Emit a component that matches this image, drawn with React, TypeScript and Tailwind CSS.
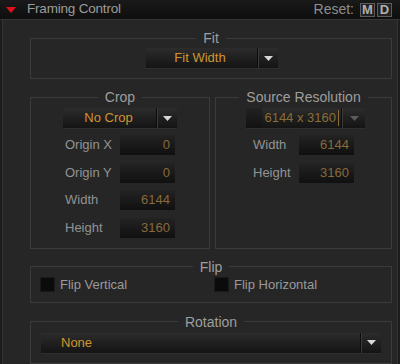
import React from "react";

const font = { fontFamily: '"Liberation Sans", Arial, sans-serif' };

function Arrow({ dim = false }: { dim?: boolean }) {
  return (
    <svg width="9" height="5" viewBox="0 0 9 5">
      <polygon points="0,0 9,0 4.5,5" fill={dim ? "#5a5a5a" : "#d8d8d8"} />
    </svg>
  );
}

function Dropdown({
  text,
  w,
  arrowW,
  align = "center",
  dim = false,
}: {
  text: string;
  w: string;
  arrowW: string;
  align?: "center" | "left" | "right";
  dim?: boolean;
}) {
  return (
    <div className={`flex h-[20px] ${w} bg-gradient-to-b from-[#2c2c2c] to-[#141414] shadow-[0_1px_0_#2e2e2e]`}>
      {dim && <div className="w-[16px] bg-gradient-to-b from-[#222222] to-[#121212]" />}
      <div
        className={`flex flex-1 items-center text-[13px] ${
          align === "center" ? "justify-center pr-[2px]" : align === "left" ? "justify-start pl-[20px]" : "justify-end pr-[2px]"
        } ${dim ? "text-[#8c6c36]" : "text-[#cf962e]"}`}
      >
        {text}
        {dim && <span className="ml-[2px] h-[16px] w-px bg-[#8c6c36]" />}
      </div>
      <div className="w-px bg-[#0c0c0c]" />
      <div className="w-px bg-[#3a3a3a]" />
      <div className={`flex ${arrowW} items-center justify-center`}>
        <Arrow dim={dim} />
      </div>
    </div>
  );
}

function Field({ label, value, labelW }: { label: string; value: string; labelW: string }) {
  return (
    <div className="flex h-[20px] items-center">
      <div className={`${labelW} text-[13px] text-[#939393]`}>{label}</div>
      <div className="flex h-[20px] w-[55px] items-center justify-end bg-gradient-to-b from-[#232323] to-[#101010] pr-[5px] text-[13px] text-[#88693a]">
        {value}
      </div>
    </div>
  );
}

function Group({ title, className = "", children }: { title: string; className?: string; children: React.ReactNode }) {
  return (
    <fieldset className={`border border-[#3b3b3b] ${className}`}>
      <legend className="mx-auto px-[7px] text-[14px] leading-[14px] text-[#9e9e9e]">{title}</legend>
      {children}
    </fieldset>
  );
}

export default function App() {
  return (
    <div className="h-[364px] w-[400px] overflow-hidden bg-[#1c1c1c]" style={font}>
      <div className="flex h-[20px] items-center border-b border-[#363636] bg-gradient-to-b from-[#1a1a1a] to-[#0e0e0e] pl-[6px] pr-[8px]">
        <svg width="10" height="6" viewBox="0 0 10 6" className="mt-[1px]">
          <polygon points="0,0 10,0 5,6" fill="#e3101b" />
        </svg>
        <span className="ml-[11px] text-[13.5px] tracking-[-0.2px] text-[#9c9c9c]">Framing Control</span>
        <div className="ml-auto flex items-center">
          <span className="mr-[6px] text-[14px] text-[#8e8e8e]">Reset:</span>
          <div className="flex h-[14px] w-[15px] items-center justify-center border border-[#5c5c5c] bg-[#232323] text-[13px] font-bold text-[#b0b0b0]">
            M
          </div>
          <div className="ml-[2px] flex h-[14px] w-[15px] items-center justify-center border border-[#5c5c5c] bg-[#232323] text-[13px] font-bold text-[#b0b0b0]">
            D
          </div>
        </div>
      </div>
      <div className="ml-[2px] mr-[2px] h-[344px] border-l border-r border-[#333333] bg-[#262626] pl-[27px] pr-[5px] pt-[11px]">
        <Group title="Fit" className="pb-[10px] pt-[3px]">
          <div className="flex justify-center pl-[1px]">
            <Dropdown text="Fit Width" w="w-[132px]" arrowW="w-[19px]" />
          </div>
        </Group>
        <div className="mt-[11px] flex gap-[5px]">
          <Group title="Crop" className="w-[180px] pb-[10px] pt-[4px]">
            <div className="flex flex-col items-center">
              <Dropdown text="No Crop" w="w-[114px]" arrowW="w-[19px]" />
              <div className="mt-[7px] flex flex-col gap-[7.6px]">
                <Field label="Origin X" value="0" labelW="w-[55px]" />
                <Field label="Origin Y" value="0" labelW="w-[55px]" />
                <Field label="Width" value="6144" labelW="w-[55px]" />
                <Field label="Height" value="3160" labelW="w-[55px]" />
              </div>
            </div>
          </Group>
          <Group title="Source Resolution" className="flex-1 pb-[10px] pt-[4px]">
            <div className="flex flex-col items-center">
              <div className="pl-[4px]">
                <Dropdown text="6144 x 3160" w="w-[119px]" arrowW="w-[22px]" align="right" dim />
              </div>
              <div className="mt-[7px] flex flex-col gap-[7.6px]">
                <Field label="Width" value="6144" labelW="w-[46px]" />
                <Field label="Height" value="3160" labelW="w-[46px]" />
              </div>
            </div>
          </Group>
        </div>
        <Group title="Flip" className="mt-[11px] pb-[9px] pt-[3px]">
          <div className="flex h-[16px] items-center pl-[10px]">
            <div className="flex w-[174px] items-center">
              <div className="h-[13px] w-[13px] bg-[#0b0b0b] shadow-[0_0_0_1px_#1a1a1a]" />
              <span className="ml-[6px] text-[13px] text-[#9a9a9a]">Flip Vertical</span>
            </div>
            <div className="flex items-center">
              <div className="h-[13px] w-[13px] bg-[#0b0b0b] shadow-[0_0_0_1px_#1a1a1a]" />
              <span className="ml-[6px] text-[13px] text-[#9a9a9a]">Flip Horizontal</span>
            </div>
          </div>
        </Group>
        <Group title="Rotation" className="mt-[12px] pb-[10px] pt-[4px]">
          <div className="pl-[10px] pr-[10px]">
            <Dropdown text="None" w="w-full" arrowW="w-[19px]" align="left" />
          </div>
        </Group>
      </div>
    </div>
  );
}
